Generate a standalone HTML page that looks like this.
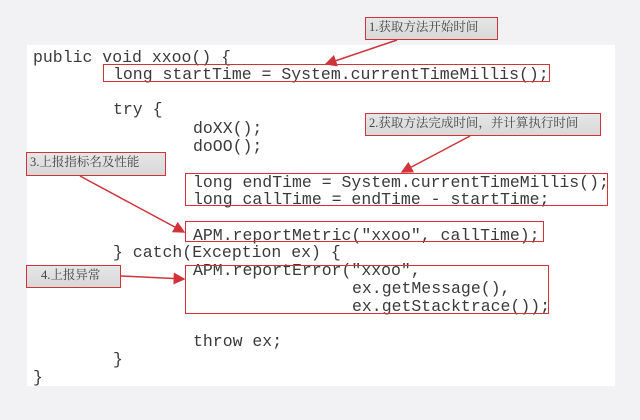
<!DOCTYPE html>
<html><head><meta charset="utf-8"><style>
body{margin:0;width:640px;height:420px;background:#f2f2f4;position:relative;overflow:hidden}
.panel{position:absolute;left:27px;top:45px;width:588px;height:341px;background:#fff}
.c{position:absolute;font-family:"Liberation Mono",monospace;font-size:16.5px;color:#3a3a3a;white-space:pre;line-height:18px}
.box{position:absolute;border:1.5px solid #d0343a;box-sizing:border-box}
.lab{position:absolute;border:1.5px solid #d0343a;box-sizing:border-box;background:linear-gradient(#e6e6e6,#d8d8d8);font-family:"Liberation Serif","Noto Serif CJK SC",serif;font-size:12.5px;color:#444;line-height:19px;padding-left:3px}
svg{position:absolute;left:0;top:0}
</style></head><body>
<div class="panel"></div>
<div class="c" style="left:33px;top:49px">public void xxoo() {</div>
<div class="c" style="left:113px;top:66px">long startTime = System.currentTimeMillis();</div>
<div class="c" style="left:113px;top:101px">try {</div>
<div class="c" style="left:193px;top:120px">doXX();</div>
<div class="c" style="left:193px;top:138px">doOO();</div>
<div class="c" style="left:193px;top:174px">long endTime = System.currentTimeMillis();</div>
<div class="c" style="left:193px;top:191px">long callTime = endTime - startTime;</div>
<div class="c" style="left:193px;top:227px">APM.reportMetric("xxoo", callTime);</div>
<div class="c" style="left:113px;top:244px">} catch(Exception ex) {</div>
<div class="c" style="left:193px;top:262px">APM.reportError("xxoo",</div>
<div class="c" style="left:352px;top:280px">ex.getMessage(),</div>
<div class="c" style="left:352px;top:298px">ex.getStacktrace());</div>
<div class="c" style="left:193px;top:333px">throw ex;</div>
<div class="c" style="left:113px;top:351px">}</div>
<div class="c" style="left:33px;top:369px">}</div>
<div class="box" style="left:103px;top:64px;width:447px;height:18px"></div>
<div class="box" style="left:185px;top:173px;width:423px;height:33px"></div>
<div class="box" style="left:185px;top:221px;width:359px;height:21px"></div>
<div class="box" style="left:185px;top:265px;width:364px;height:49px"></div>
<div class="lab" style="left:365px;top:17px;width:133px;height:23px">1.获取方法开始时间</div>
<div class="lab" style="left:365px;top:113px;width:236px;height:23px">2.获取方法完成时间，并计算执行时间</div>
<div class="lab" style="left:26px;top:152px;width:140px;height:24px">3.上报指标名及性能</div>
<div class="lab" style="left:26px;top:265px;width:95px;height:23px;padding-left:14px">4.上报异常</div>
<svg width="640" height="420">
<defs><marker id="a" markerWidth="8" markerHeight="8" refX="7" refY="4" orient="auto"><path d="M0,0 L8,4 L0,8 z" fill="#d0343a"/></marker></defs>
<g stroke="#d0343a" stroke-width="1.5" fill="none" marker-end="url(#a)">
<line x1="397" y1="40" x2="326" y2="64"/>
<line x1="470" y1="136" x2="402" y2="172"/>
<line x1="80" y1="176" x2="184" y2="232"/>
<line x1="121" y1="276" x2="184" y2="279"/>
</g></svg>
</body></html>
